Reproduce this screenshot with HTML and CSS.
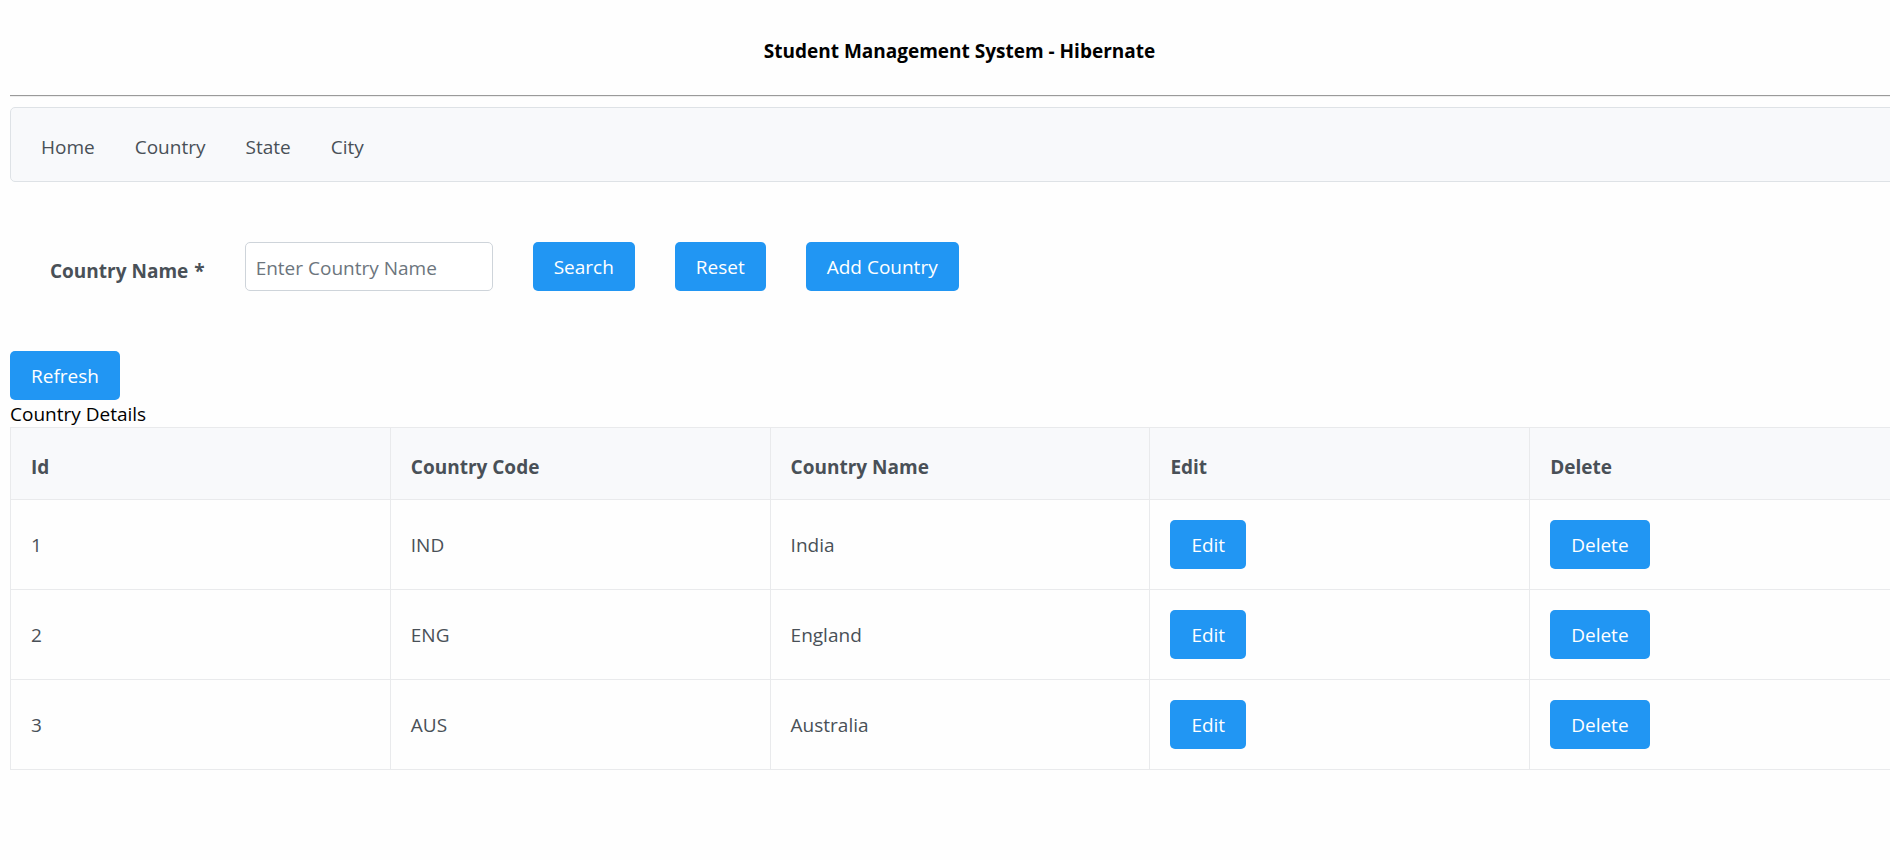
FILE: index.html
```html
<!DOCTYPE html>
<html lang="en">
<head>
<meta charset="utf-8">
<title>Student Management System - Hibernate</title>
<link rel="stylesheet" href="styles.css">
</head>
<body>
<div class="page">
  <header class="header"><h1 class="title">Student Management System - Hibernate</h1></header>
  <hr class="rule">
  <nav class="menubar">
    <a class="menu-link" href="#">Home</a>
    <a class="menu-link" href="#">Country</a>
    <a class="menu-link" href="#">State</a>
    <a class="menu-link" href="#">City</a>
  </nav>
  <form class="search">
    <label class="label" for="country-name"><span>Country Name</span><span>*</span></label>
    <input class="input" id="country-name" type="text" placeholder="Enter Country Name">
    <button class="button" type="button">Search</button>
    <button class="button" type="reset">Reset</button>
    <button class="button" type="button">Add Country</button>
  </form>
  <button class="button" type="button">Refresh</button>
  <table class="table">
    <caption class="caption">Country Details</caption>
    <thead>
      <tr><th>Id</th><th>Country Code</th><th>Country Name</th><th>Edit</th><th>Delete</th></tr>
    </thead>
    <tbody>
      <tr><td>1</td><td>IND</td><td>India</td><td class="action"><button class="button" type="button">Edit</button></td><td class="action"><button class="button" type="button">Delete</button></td></tr>
      <tr><td>2</td><td>ENG</td><td>England</td><td class="action"><button class="button" type="button">Edit</button></td><td class="action"><button class="button" type="button">Delete</button></td></tr>
      <tr><td>3</td><td>AUS</td><td>Australia</td><td class="action"><button class="button" type="button">Edit</button></td><td class="action"><button class="button" type="button">Delete</button></td></tr>
    </tbody>
  </table>
</div>
</body>
</html>
```
FILE: styles.css
```css
* { box-sizing: border-box; }

body {
  margin: 0;
  overflow-x: hidden;
  background: #fefefe;
  color: #000;
  font: 19px/27px "Segoe UI", "Open Sans", "Noto Sans", sans-serif;
}

/* The content runs past the right edge of the window. */
.page { margin: 0 -19px 0 10px; }

.header { padding: 38px 0 30px; }

.title {
  margin: 0;
  font-size: 19px;
  font-weight: 700;
  text-align: center;
}

.rule {
  height: 2px;
  margin: 0 0 10px;
  border: 0;
  border-top: 1px solid #9a9a9a;
  border-bottom: 1px solid #eee;
}

.menubar {
  display: flex;
  gap: 40px;
  padding: 26px 30px 20px;
  border: 1px solid #dee2e6;
  border-radius: 5px;
  background: #f8f9fb;
}

.menu-link { color: #495057; text-decoration: none; }

.search {
  display: flex;
  align-items: flex-start;
  gap: 40px;
  padding: 60px 40px;
}

.label {
  display: flex;
  gap: 6px;
  padding-top: 16px;
  color: #495057;
  font-weight: 700;
}

.input {
  width: 248px;
  height: 49px;
  padding: 12px 10px 10px;
  border: 1px solid #ced4da;
  border-radius: 5px;
  background: #fff;
  color: #495057;
  font: inherit;
}

.input::placeholder { color: #6c757d; opacity: 1; }

.button {
  display: block;
  padding: 12px 21px 10px;
  border: 0;
  border-radius: 5px;
  background: #2196f3;
  color: #fff;
  font: inherit;
}

.table {
  width: 100%;
  table-layout: fixed;
  border-spacing: 0;
  color: #495057;
}

.caption {
  padding-top: 2px;
  color: #000;
  line-height: 25px;
  text-align: left;
}

.table th,
.table td {
  padding: 22px 20px 20px;
  border: solid #e9eaec;
  border-width: 0 0 1px 1px;
  text-align: left;
}

.table th {
  padding: 26px 20px 18px;
  border-top-width: 1px;
  background: #f8f9fb;
  font-weight: 700;
}

.table .action { padding: 20px; }
```
